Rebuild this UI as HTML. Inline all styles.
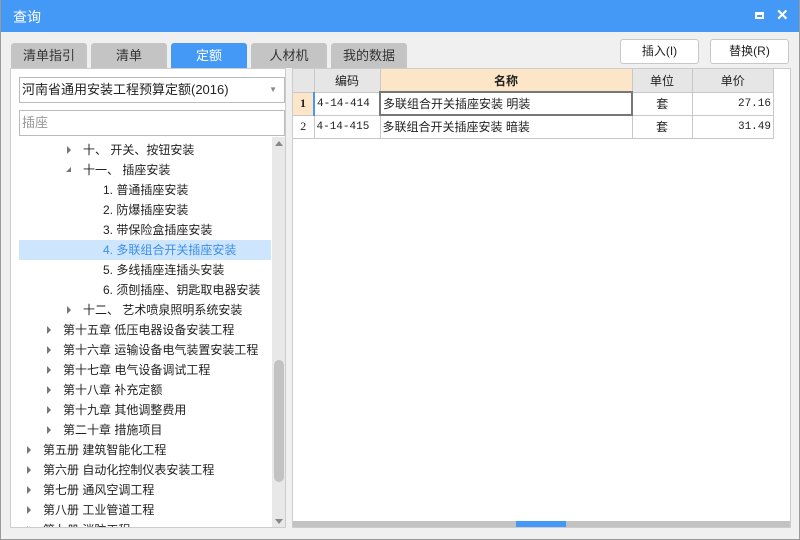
<!DOCTYPE html>
<html><head><meta charset="utf-8"><style>
*{box-sizing:border-box;margin:0;padding:0}
body{width:800px;height:540px;background:#f0f0f0;font-family:"Liberation Sans","Noto Sans CJK SC",sans-serif;font-size:12px;color:#222;position:relative;overflow:hidden}
.a{position:absolute}
.title{left:0;top:0;width:800px;height:32px;background:#4499f7;color:#fff;font-size:14px;line-height:34px;padding-left:13px}
.tab{top:43px;height:25px;background:#c4c4c4;text-align:center;line-height:25px;font-size:13px;color:#333;border-radius:3px 3px 0 0}
.btn{top:39px;height:25px;width:79px;background:#fff;border:1px solid #c8c8c8;border-radius:3px;text-align:center;line-height:23px;font-size:12px}
.tr{height:20px;line-height:20px;font-size:12px;white-space:nowrap}
.arr{position:absolute;width:0;height:0;border-top:4px solid transparent;border-bottom:4px solid transparent;border-left:4px solid #777;top:6px}
td{border:1px solid #c8c8c8;height:23px;padding:0 2px;font-size:12px;white-space:nowrap}
table{border-collapse:collapse}
.m{font-family:"Liberation Mono","Noto Sans CJK SC",monospace;font-size:11px}
</style></head><body>
<div class="a title">查询
<div class="a" style="left:755px;top:12px;width:9px;height:7px;border:2px solid #fff;border-top-width:3px"></div>
<div class="a" style="left:776px;top:7px;font-size:15px;line-height:18px;font-weight:bold">✕</div>
</div>
<div class="a" style="left:0;top:0;width:800px;height:540px;border:1px solid #9a9a9a;border-top:none;pointer-events:none"></div>
<div class="a tab" style="left:11px;width:76px">清单指引</div>
<div class="a tab" style="left:91px;width:76px">清单</div>
<div class="a tab" style="left:171px;width:76px;background:#4499f7;color:#fff">定额</div>
<div class="a tab" style="left:251px;width:76px">人材机</div>
<div class="a tab" style="left:331px;width:76px">我的数据</div>
<div class="a btn" style="left:620px">插入(I)</div>
<div class="a btn" style="left:710px">替换(R)</div>

<div class="a" style="left:10px;top:68px;width:276px;height:460px;background:#fff;border:1px solid #ccc;overflow:hidden">
 <div class="a" style="left:8px;top:8px;width:266px;height:26px;border:1px solid #bbb;line-height:24px;padding-left:2px;font-size:13px">河南省通用安装工程预算定额(2016)<span class="a" style="right:7px;top:0;font-size:8px;color:#888">▼</span></div>
 <div class="a" style="left:8px;top:41px;width:266px;height:26px;border:1px solid #bbb;line-height:24px;padding-left:2px;font-size:13px;color:#999">插座</div>
 <div class="a" style="left:261px;top:68px;width:14px;height:392px;background:#e8e8e8">
  <div class="a" style="left:3px;top:4px;border-left:4px solid transparent;border-right:4px solid transparent;border-bottom:5px solid #888"></div>
  <div class="a" style="left:2px;top:223px;width:10px;height:122px;background:#c2c2c2;border-radius:5px"></div>
  <div class="a" style="left:3px;top:382px;border-left:4px solid transparent;border-right:4px solid transparent;border-top:5px solid #888"></div>
 </div>
 <div class="a" style="left:0;top:71px;width:261px">
  <div class="tr" style="position:relative;padding-left:72px"><i class="arr" style="left:56px"></i>十、 开关、按钮安装</div>
  <div class="tr" style="position:relative;padding-left:72px"><i class="a" style="left:55px;top:7px;border-left:5px solid transparent;border-bottom:5px solid #777"></i>十一、 插座安装</div>
  <div class="tr" style="padding-left:92px">1. 普通插座安装</div>
  <div class="tr" style="padding-left:92px">2. 防爆插座安装</div>
  <div class="tr" style="padding-left:92px">3. 带保险盒插座安装</div>
  <div class="tr" style="background:#cde6fd;color:#3f8ee8;margin-left:8px;padding-left:84px;width:252px">4. 多联组合开关插座安装</div>
  <div class="tr" style="padding-left:92px">5. 多线插座连插头安装</div>
  <div class="tr" style="padding-left:92px">6. 须刨插座、钥匙取电器安装</div>
  <div class="tr" style="position:relative;padding-left:72px"><i class="arr" style="left:56px"></i>十二、 艺术喷泉照明系统安装</div>
  <div class="tr" style="position:relative;padding-left:52px"><i class="arr" style="left:36px"></i>第十五章 低压电器设备安装工程</div>
  <div class="tr" style="position:relative;padding-left:52px"><i class="arr" style="left:36px"></i>第十六章 运输设备电气装置安装工程</div>
  <div class="tr" style="position:relative;padding-left:52px"><i class="arr" style="left:36px"></i>第十七章 电气设备调试工程</div>
  <div class="tr" style="position:relative;padding-left:52px"><i class="arr" style="left:36px"></i>第十八章 补充定额</div>
  <div class="tr" style="position:relative;padding-left:52px"><i class="arr" style="left:36px"></i>第十九章 其他调整费用</div>
  <div class="tr" style="position:relative;padding-left:52px"><i class="arr" style="left:36px"></i>第二十章 措施项目</div>
  <div class="tr" style="position:relative;padding-left:32px"><i class="arr" style="left:16px"></i>第五册 建筑智能化工程</div>
  <div class="tr" style="position:relative;padding-left:32px"><i class="arr" style="left:16px"></i>第六册 自动化控制仪表安装工程</div>
  <div class="tr" style="position:relative;padding-left:32px"><i class="arr" style="left:16px"></i>第七册 通风空调工程</div>
  <div class="tr" style="position:relative;padding-left:32px"><i class="arr" style="left:16px"></i>第八册 工业管道工程</div>
  <div class="tr" style="position:relative;padding-left:32px"><i class="arr" style="left:16px"></i>第九册 消防工程</div>
 </div>
</div>

<div class="a" style="left:292px;top:68px;width:499px;height:460px;background:#fff;border:1px solid #ccc;overflow:hidden">
 <table class="a" style="left:0;top:0;width:481px">
  <tr style="background:#e6e6e6;text-align:center;font-size:13px"><td style="width:21px;border-left:none;border-top:none"></td><td style="width:66px;border-top:none">编码</td><td style="width:252px;background:#fde5c8;font-weight:bold;border-top:none">名称</td><td style="width:60px;border-top:none">单位</td><td style="border-top:none">单价</td></tr>
  <tr><td style="background:#fde5c8;text-align:center;font-weight:bold;border-left:none;font-family:'Liberation Serif',serif;border-right:2px solid #4499f7">1</td><td class="m">4-14-414</td><td style="border:2px solid #777">多联组合开关插座安装 明装</td><td style="text-align:center">套</td><td class="m" style="text-align:right">27.16</td></tr>
  <tr><td style="text-align:center;border-left:none;font-family:'Liberation Serif',serif">2</td><td class="m">4-14-415</td><td>多联组合开关插座安装 暗装</td><td style="text-align:center">套</td><td class="m" style="text-align:right">31.49</td></tr>
 </table>
 <div class="a" style="left:0;top:452px;width:499px;height:6px;background:#c2c2c2"></div>
 <div class="a" style="left:223px;top:452px;width:50px;height:6px;background:#4499f7"></div>
</div>
</body></html>
